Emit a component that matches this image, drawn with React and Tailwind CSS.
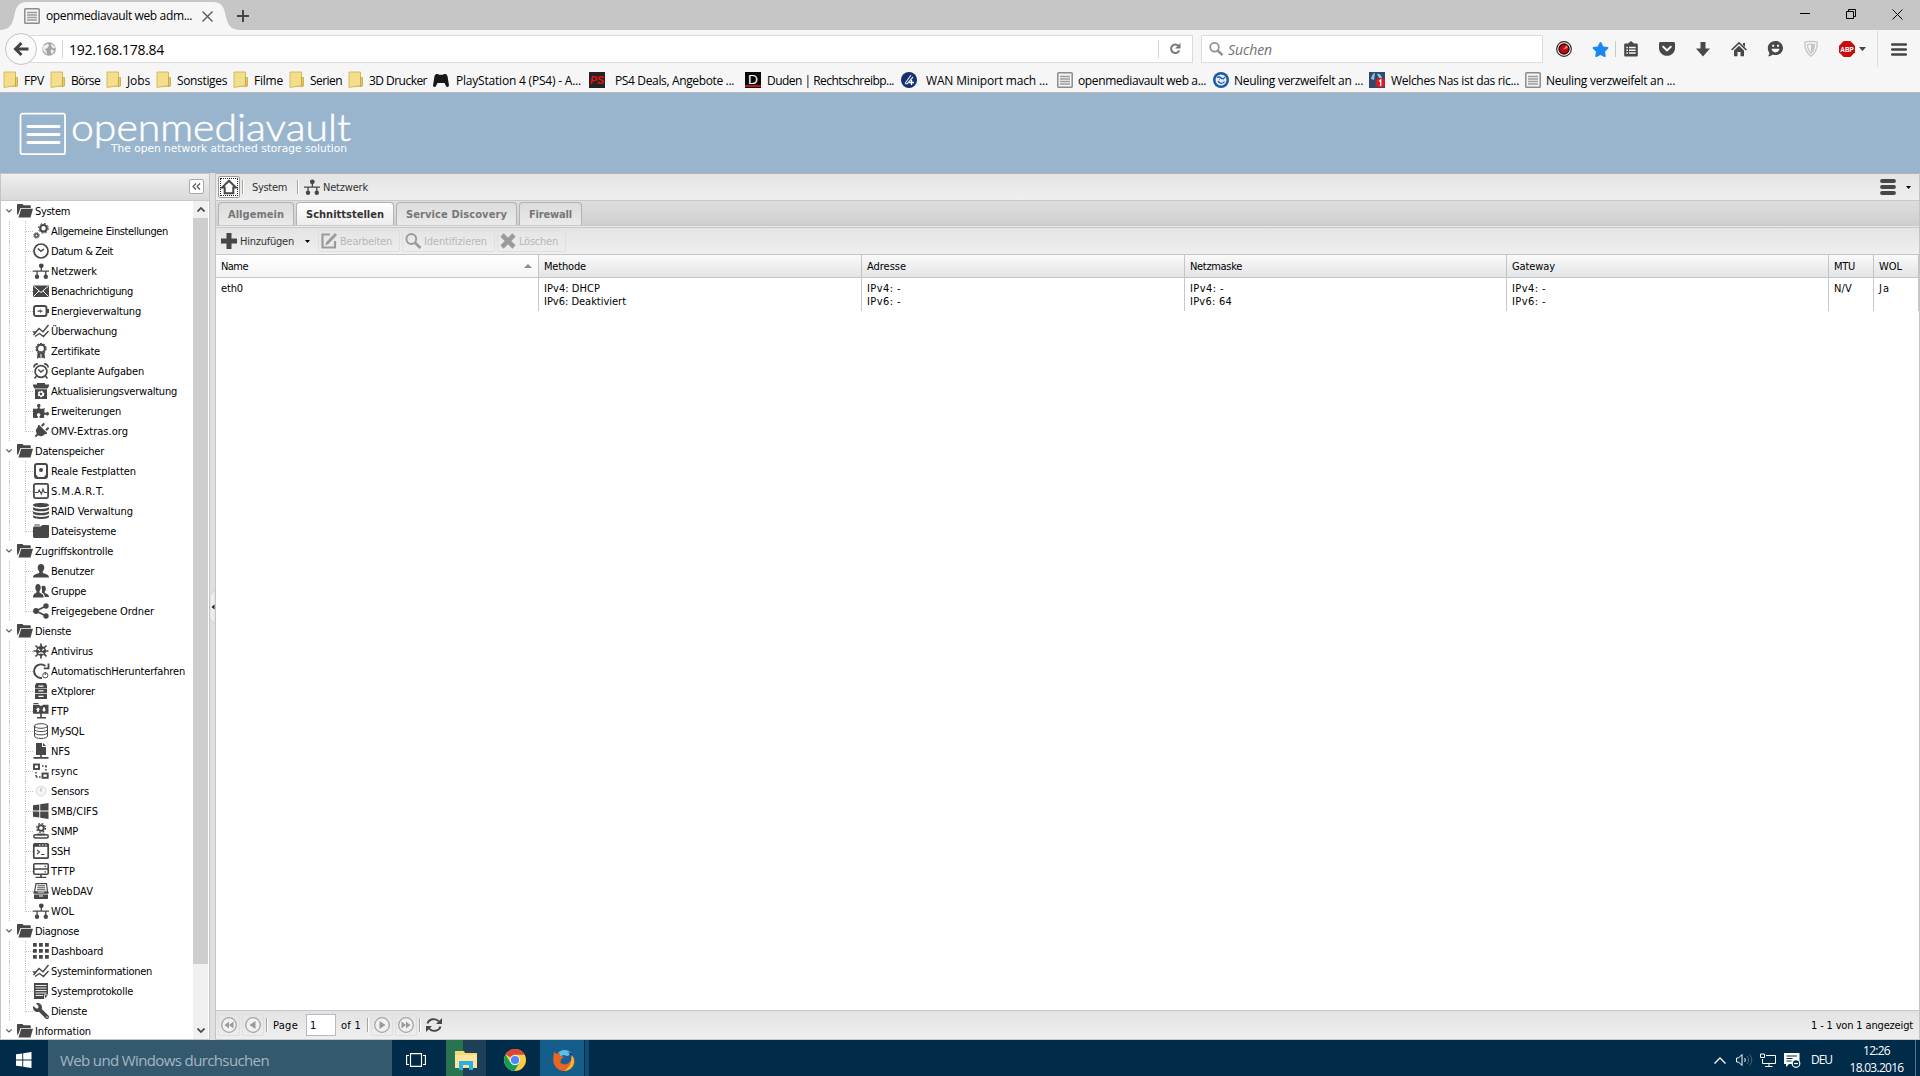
import { useLayoutEffect, useRef } from 'react';
import { FaPuzzlePiece, FaWrench, FaPlug, FaStar } from 'react-icons/fa';

const TREE = [
  {
    label: 'System',
    width: 35,
    items: [
      ['gears', 'Allgemeine Einstellungen', 117],
      ['clock', 'Datum & Zeit', 62],
      ['network', 'Netzwerk', 46],
      ['mail', 'Benachrichtigung', 82],
      ['power', 'Energieverwaltung', 90],
      ['chart', 'Überwachung', 66],
      ['award', 'Zertifikate', 49],
      ['alarm', 'Geplante Aufgaben', 93],
      ['update', 'Aktualisierungsverwaltung', 126],
      ['puzzle', 'Erweiterungen', 70],
      ['plug', 'OMV-Extras.org', 77],
    ],
  },
  {
    label: 'Datenspeicher',
    width: 69,
    items: [
      ['disk', 'Reale Festplatten', 85],
      ['smart', 'S.M.A.R.T.', 54],
      ['raid', 'RAID Verwaltung', 82],
      ['folderClosed', 'Dateisysteme', 65],
    ],
  },
  {
    label: 'Zugriffskontrolle',
    width: 78,
    items: [
      ['user', 'Benutzer', 43],
      ['group', 'Gruppe', 35],
      ['share', 'Freigegebene Ordner', 103],
    ],
  },
  {
    label: 'Dienste',
    width: 36,
    items: [
      ['virus', 'Antivirus', 42],
      ['autoshut', 'AutomatischHerunterfahren', 134],
      ['drawers', 'eXtplorer', 44],
      ['ftp', 'FTP', 18],
      ['database', 'MySQL', 33],
      ['nfs', 'NFS', 19],
      ['rsync', 'rsync', 27],
      ['gauge', 'Sensors', 38],
      ['windows', 'SMB/CIFS', 47],
      ['snmp', 'SNMP', 27],
      ['terminal', 'SSH', 19],
      ['tftp', 'TFTP', 24],
      ['webdav', 'WebDAV', 42],
      ['network', 'WOL', 23],
    ],
  },
  {
    label: 'Diagnose',
    width: 44,
    items: [
      ['grid', 'Dashboard', 52],
      ['chart', 'Systeminformationen', 101],
      ['log', 'Systemprotokolle', 82],
      ['wrench', 'Dienste', 36],
    ],
  },
  { label: 'Information', width: 56, items: [] },
];

const BOOKMARKS = [
  { icon: 'bmFolder', label: 'FPV', width: 20, box: 'w-[47px]', gap: 'w-5' },
  { icon: 'bmFolder', label: 'Börse', width: 29, box: 'w-14', gap: 'w-5' },
  { icon: 'bmFolder', label: 'Jobs', width: 23, box: 'w-[50px]', gap: 'w-5' },
  { icon: 'bmFolder', label: 'Sonstiges', width: 50, box: 'w-[77px]', gap: 'w-5' },
  { icon: 'bmFolder', label: 'Filme', width: 29, box: 'w-14', gap: 'w-5' },
  { icon: 'bmFolder', label: 'Serien', width: 32, box: 'w-[59px]', gap: 'w-5' },
  { icon: 'bmFolder', label: '3D Drucker', width: 58, box: 'w-[84px]', gap: 'w-5' },
  { icon: 'gamepad', label: 'PlayStation 4 (PS4) - A...', width: 125, box: 'w-[156px]', gap: 'w-[23px]' },
  { icon: 'ps', label: 'PS4 Deals, Angebote ...', width: 119, box: 'w-[156px]', gap: 'w-[26px]' },
  { icon: 'duden', label: 'Duden | Rechtschreibp...', width: 127, box: 'w-[156px]', gap: 'w-[22px]' },
  { icon: 'wan', label: 'WAN Miniport mach ...', width: 122, box: 'w-[156px]', gap: 'w-[25px]' },
  { icon: 'omv', label: 'openmediavault web a...', width: 128, box: 'w-[156px]', gap: 'w-[21px]' },
  { icon: 'face', label: 'Neuling verzweifelt an ...', width: 129, box: 'w-[156px]', gap: 'w-[21px]' },
  { icon: 'nas', label: 'Welches Nas ist das ric...', width: 128, box: 'w-[156px]', gap: 'w-[22px]' },
  { icon: 'omv', label: 'Neuling verzweifelt an ...', width: 129, box: 'w-[156px]', gap: 'w-[21px]' },
];

const COLUMNS = [
  { title: 'Name', tw: 27, lines: [['eth0', 22]], box: 'w-[323px]', sorted: true },
  { title: 'Methode', tw: 42, lines: [['IPv4: DHCP', 56], ['IPv6: Deaktiviert', 82]], box: 'w-[323px]' },
  { title: 'Adresse', tw: 39, lines: [['IPv4: -', 34], ['IPv6: -', 34]], box: 'w-[323px]' },
  { title: 'Netzmaske', tw: 52, lines: [['IPv4: -', 34], ['IPv6: 64', 42]], box: 'w-[322px]' },
  { title: 'Gateway', tw: 43, lines: [['IPv4: -', 34], ['IPv6: -', 34]], box: 'w-[322px]' },
  { title: 'MTU', tw: 21, lines: [['N/V', 18]], box: 'w-[45px]' },
  { title: 'WOL', tw: 23, lines: [['Ja', 11]], box: 'w-[45px]' },
];

const ICONS = {
  gears: (
    <>
      <circle cx="10.5" cy="5.3" r="3.3" fill="none" stroke="currentColor" strokeWidth="2.2" />
      <circle cx="10.500" cy="5.300" r="4.900" fill="none" stroke="currentColor" strokeWidth="1" strokeDasharray="1.920 1.920" />
      <circle cx="3.500" cy="12.400" r="1.700" fill="none" stroke="currentColor" strokeWidth="1.500" />
      <circle cx="3.500" cy="12.400" r="2.800" fill="none" stroke="currentColor" strokeWidth="1" strokeDasharray="1.100 1.100" />
    </>
  ),
  clock: (
    <g fill="none" stroke="currentColor">
      <circle cx="8" cy="8" r="7" strokeWidth="1.700" />
      <path d="M4.800 5.500 8 8.300l3-2.300" strokeWidth="1.500" />
    </g>
  ),
  network: (
    <>
      <circle cx="8.300" cy="2.800" r="2.400" />
      <circle cx="4" cy="13.800" r="2.200" />
      <circle cx="12.800" cy="13.800" r="2.200" />
      <path d="M7.700 3h1.300v4.500h7v1.200h-2.600V13h-1.300V8.700H4.700V13H3.400V8.700H0V7.500h7.700z" />
    </>
  ),
  mail: (
    <>
      <path d="M0 2.500h16v11.500H0z" />
      <path d="m.5 3 7.500 6.500L15.500 3M.5 13.500l5.500-5.500m9.500 5.500L10 8" fill="none" stroke="#fff" strokeWidth="1" />
    </>
  ),
  power: (
    <>
      <rect x="1" y="3" width="12.500" height="10" rx="2" fill="none" stroke="currentColor" strokeWidth="1.900" />
      <path d="M14 6h2v4h-2zM4.500 7.500h2l1-2v2h2v1.200h-1.500l-1 2v-2h-2.500z" />
    </>
  ),
  chart: (
    <path d="M.5 12 6 5.500l4 3.300L15.500 2M0 9h2.500M2 13.500l4.500-3 4 3 5-5.500" fill="none" stroke="currentColor" strokeWidth="1.400" />
  ),
  award: (
    <>
      <circle cx="8" cy="5.500" r="3.800" fill="none" stroke="currentColor" strokeWidth="1.900" />
      <circle cx="8" cy="5.500" r="5" fill="none" stroke="currentColor" strokeWidth="1.200" strokeDasharray="2 1.140" />
      <path d="M4.500 9.500 7.500 10v5.500L6 14.500l-2 1.500zM11.500 9.500 8.500 10v5.500l1.500-1L12 16z" />
    </>
  ),
  alarm: (
    <g fill="none" stroke="currentColor">
      <circle cx="8" cy="8.500" r="5.900" strokeWidth="1.700" />
      <path d="M5.300 6.500 8 9l2.800-2.300" strokeWidth="1.400" />
      <path d="M.8 4.500C1 2.500 2.500 1 4.800.9M15.200 4.500C15 2.500 13.500 1 11.200.9M3.500 13l-2 2.500M12.500 13l2 2.500" strokeWidth="1.600" />
    </g>
  ),
  update: (
    <>
      <path d="M4 0h8v1.500h4V3l-1.500 2.500h-13L0 3V1.500h4zM2 6.200h12V16H2z" />
      <circle cx="8" cy="11" r="2.300" fill="none" stroke="#fff" strokeWidth="2" strokeDasharray="1.500 .9" />
      <circle cx="8" cy="11" r="2" fill="none" stroke="#fff" strokeWidth="1.200" />
    </>
  ),
  puzzle: <FaPuzzlePiece size={16} />,
  plug: <g transform="rotate(45 8 8)"><FaPlug size={16} /></g>,
  wrench: <g transform="matrix(-1 0 0 1 16 0)"><FaWrench size={16} /></g>,
  disk: (
    <>
      <rect x="2" y="1" width="12" height="14" rx="2" fill="none" stroke="currentColor" strokeWidth="2" />
      <circle cx="8" cy="7" r="2" />
      <path d="M3 11.500 5 14H3zM13 11.500 11 14h2z" />
    </>
  ),
  smart: (
    <g fill="none" stroke="currentColor">
      <rect x=".9" y=".9" width="14.200" height="14.200" rx="1.500" strokeWidth="1.800" />
      <path d="M2 9.500h3L6.200 7l2.200 4 1.600-5 1.300 3.500h2.700" strokeWidth="1.100" />
    </g>
  ),
  raid: (
    <path d="M0 2c0-1.300 3.500-2 8-2s8 .7 8 2-3.500 2.300-8 2.300S0 3.300 0 2zm0 2.300C1.500 5.500 4.500 6 8 6s6.500-.5 8-1.700v2C15.500 7.700 12 8.300 8 8.300S.5 7.700 0 6.300zm0 4C1.500 9.500 4.500 10 8 10s6.500-.5 8-1.700v2c-.5 1.400-4 2-8 2s-7.500-.6-8-2zm0 4C1.500 13.500 4.500 14 8 14s6.500-.5 8-1.700V14c-.5 1.300-4 2-8 2s-7.500-.7-8-2z" />
  ),
  folderClosed: <path d="M1.500 1.500h5l1 1H1.200zM0 5c0-.8.5-1.500 1.500-1.500h6L9.500 2H15c.6 0 1 .4 1 1v10.500c0 .8-.7 1.500-1.500 1.500h-13C.7 15 0 14.300 0 13.500z" />,
  folderOpen: <path d="M.5 1h5l1 1.300h6.500c.5 0 .8.400.8.900V5H3.500L.8 12.500 0 10V1.500zM4.200 5.800H16L13.500 14.500H1.500z" />,
  user: <path d="M8 1c2 0 3.300 1.400 3.300 3.500 0 1.700-.6 3-1.500 3.700-.3 1.500.1 2 1.400 2.400C13.500 11.300 16 12 16 14.500H0c0-2.500 2.500-3.200 4.800-3.900 1.300-.4 1.700-.9 1.400-2.400-.9-.7-1.500-2-1.500-3.700C4.700 2.400 6 1 8 1z" />,
  group: (
    <>
      <path d="M5 1c1.600 0 2.700 1.300 2.700 3.300 0 1.600-.5 3-1.200 3.600-.2 1.400.1 1.900 1.200 2.400 1.600.8 3 1.500 3 4.200H0c0-2.700 1-3.400 2.400-4.200 1-.5 1.300-1 1.100-2.400-.7-.6-1.200-2-1.200-3.600C2.300 2.300 3.400 1 5 1z" />
      <path d="M8.500 3.800C9 3 9.700 2.700 10.500 2.700c1.500 0 2.300 1.100 2.300 2.700 0 1.300-.4 2.400-1 3-.2 1.100.1 1.500 1.100 2 1.700.8 3.100 1.300 3.100 3.600h-4.200c-.2-2.500-1.600-3.600-3-4.400C9.200 8 9 6.500 8.500 3.800z" />
    </>
  ),
  share: (
    <>
      <circle cx="3" cy="8" r="2.900" />
      <circle cx="13" cy="3" r="2.700" />
      <circle cx="13" cy="13" r="2.700" />
      <path d="M13 3 3 8l10 5" fill="none" stroke="currentColor" strokeWidth="1.700" />
    </>
  ),
  virus: (
    <>
      <circle cx="8" cy="8" r="5" />
      <path d="M8 .5v15M.5 8h15M2.500 2.500l11 11M13.500 2.500l-11 11" stroke="currentColor" strokeWidth="1.700" />
      <path d="m4.800 6 2.200 1.500M11.200 6 9 7.500M5.500 10.700c1.500-1 3.500-1 5 0" stroke="#fff" strokeWidth="1.100" fill="none" />
    </>
  ),
  autoshut: (
    <g fill="none" stroke="currentColor">
      <path d="M12.500 3.200A6.800 6.800 0 1 0 9 14.900" strokeWidth="1.800" />
      <path d="M15.500.5v4.800h-4.800" strokeWidth="1.800" />
      <circle cx="12.300" cy="12.300" r="2.600" strokeWidth="1" />
      <path d="M12.300 9v3" strokeWidth="1" />
    </g>
  ),
  drawers: (
    <>
      <path d="M3.500 0h9L14 2v3H2V2zM2 5.600h12v4.600H2zM2 10.900h12V16H2z" />
      <path d="M5.500 2.500h5v1.300h-5zM5.500 7.300h5v1.300h-5zM5.500 12.700h5V14h-5z" fill="#fff" />
    </>
  ),
  ftp: (
    <>
      <path d="M.5 0h5v1h-5zM0 1.800h6l1 1h2l1-1h5.500v9H0zM7.200 10.500h1.600V14H13v1.500H4V14h3.200z" />
      <path d="m5 4.300 2.200 2.500H6v2H4v-2H2.800zM11 9 8.800 6.500H10v-2h2v2h1.200z" fill="#fff" />
    </>
  ),
  database: (
    <g fill="none" stroke="currentColor" strokeWidth="1">
      <ellipse cx="8" cy="3" rx="6.500" ry="2.300" />
      <path d="M1.500 3v10c0 3.300 13 3.300 13 0V3M1.500 6.300c0 3 13 3 13 0M1.500 9.600c0 3 13 3 13 0" />
    </g>
  ),
  nfs: <path d="M3 0h6v4h4v8H3zM10 0l3 3h-3zM7.200 12h1.600v2H15.500v1.800H.5V14h6.700z" />,
  rsync: (
    <g fill="none" stroke="currentColor">
      <rect x="1" y="1.500" width="5" height="4.500" strokeWidth="1.900" />
      <rect x="9.500" y="10.500" width="5.200" height="4.300" strokeWidth="1.900" />
      <path d="M9 3h5M13 3v6M3 9v5.500M3 14h5" strokeWidth="1.600" strokeDasharray="1.600 1.400" />
    </g>
  ),
  gauge: (
    <g stroke="#ddd">
      <circle cx="8" cy="8" r="5" fill="#f4f4f4" />
      <path d="M8 5v3.500" stroke="#aaa" />
    </g>
  ),
  windows: <path d="M0 2.300 6.300 1.400v6.100H0zM7.200 1.200 15.500 0v7.500H7.200zM0 8.400h6.300v6.100L0 13.700zM7.200 8.400h8.300V16l-8.300-1.300z" />,
  snmp: (
    <g fill="none" stroke="currentColor">
      <circle cx="8" cy="5" r="2.800" strokeWidth="1.900" />
      <circle cx="8" cy="5" r="4.400" strokeWidth="1.300" strokeDasharray="1.730 1.730" />
      <rect x=".8" y="11.800" width="14.400" height="3.200" rx="1.500" strokeWidth="1.500" />
      <path d="M4 11.500h8" strokeWidth="1.800" />
    </g>
  ),
  terminal: (
    <>
      <rect x=".8" y=".8" width="14.400" height="14.400" rx="1" fill="none" stroke="currentColor" strokeWidth="1.700" />
      <path d="M1 1h14v2.800H1z" />
      <path d="M6 1.500h1.500v1H6zM9 1.500h1.500v1H9zM12 1.500h1.500v1H12z" fill="#fff" />
      <path d="m4 7 2.500 2L4 11M8 11.500h3.500" fill="none" stroke="currentColor" strokeWidth="1.200" />
    </>
  ),
  tftp: (
    <>
      <rect x=".8" y=".8" width="14.400" height="10.400" rx="1" fill="none" stroke="currentColor" strokeWidth="1.600" />
      <path d="M1 5.300h14v1.500H1zM11.500 2.700H13V4h-1.500zM11.500 8.300H13v1.300h-1.500zM7.200 11h1.600v2.700h4.500V15H2.700v-1.300h4.500z" />
    </>
  ),
  webdav: (
    <>
      <path d="M3 .7h10.500L14.500 9h-13z" fill="none" stroke="currentColor" strokeWidth="1.200" />
      <path d="M4.500 2.800h7.500M4.200 4.800h8M4 6.800h8.500" stroke="currentColor" />
      <path d="M.5 8.500h3.800l1 1.500h5.400l1-1.500h3.800v2.200H.5zM1 11.400h14V15c0 .6-.3 1-1 1H2c-.7 0-1-.4-1-1z" />
      <path d="M6 12.500h4v1H6z" fill="#fff" />
    </>
  ),
  grid: (
    <path d="M0 0h3.800v3.800H0zM6 0h3.800v3.800H6zM12 0h3.800v3.800H12zM0 6h3.800v3.800H0zM6 6h3.800v3.800H6zM12 6h3.800v3.800H12zM0 12h3.800v3.800H0zM6 12h3.800v3.800H6zM12 12h3.800v3.800H12z" />
  ),
  log: (
    <>
      <path d="M1 0h14v11.500h-4V16H1z" />
      <path d="m11.800 12.300h3L11.800 15.500z" />
      <path d="M2.500 2.500h11M2.500 5h11M2.500 7.500h11M2.500 10h11M2.500 12.500H10" stroke="#fff" strokeWidth=".9" />
    </>
  ),
  home: <path d="M8 1.700 1.200 8.400h2.500v5.900h8.600V8.400h2.500z" fill="none" stroke="currentColor" strokeWidth="2" />,
  plus: <path d="M5.500 0h5v5.500H16v5h-5.500V16h-5v-5.500H0v-5h5.500z" />,
  edit: (
    <>
      <path d="M14 8v6.500H1.500v-13H9" fill="none" stroke="currentColor" strokeWidth="2.200" />
      <path d="M14 0l2 2-8.500 9-3.500 1.500L5.300 9z" />
    </>
  ),
  search: (
    <g fill="none" stroke="currentColor">
      <circle cx="6.300" cy="6" r="4.900" strokeWidth="2" />
      <path d="m10 9.800 5.500 5.200" strokeWidth="2.800" />
    </g>
  ),
  cross: <path d="m2 2 12 12M14 2 2 14" stroke="currentColor" strokeWidth="4.600" />,
  refresh: (
    <>
      <path d="M1.500 6.500C3 1.500 9.500.8 12.800 4.300M14.500 9.500C13 14.500 6.500 15.200 3.200 11.700" fill="none" stroke="currentColor" strokeWidth="1.900" />
      <path d="M16 1v6h-6zM0 15V9h6z" />
    </>
  ),
  bmFolder: (
    <>
      <path d="M1.500 0h10v15h-10z" fill="#e9cf6b" />
      <path d="M0 0h11.500v13.500L0 15.500z" fill="#f3df8b" stroke="#cfae4b" strokeWidth=".8" />
      <path d="M11.500 5.500h2v8.500l-2 .8z" fill="#e9cb62" stroke="#c29c38" strokeWidth=".7" />
    </>
  ),
  omv: (
    <>
      <rect x=".8" y=".8" width="14.400" height="14.400" rx=".8" fill="#f4f4f4" stroke="#8c8c8c" strokeWidth="1.500" />
      <path d="M3 4.500h10M3 7h10M3 9.500h10M3 12h10" stroke="#9b9b9b" strokeWidth="1.300" />
    </>
  ),
  gamepad: <path d="M3 2h2.500v.8h5V2H13l1.500 2L16 13.500c-.5 2-2.500 1.700-3 .5l-1.500-3h-7L3 14c-.5 1.200-2.500 1.500-3-.5L1.500 4z" fill="#181818" />,
  ps: (
    <>
      <path d="M0 0h16v16H0z" fill="#232323" />
      <text x="1" y="12.200" fontSize="10.500" fontWeight="900" fontStyle="italic" textLength="14" fill="#f00d0d" fontFamily="Liberation Sans">PS</text>
    </>
  ),
  duden: (
    <>
      <path d="M0 0h16v16H0z" fill="#080808" />
      <path d="M0 13h16v2H0z" fill="#c1121f" />
      <text x="3" y="11.500" fontSize="12" textLength="10" lengthAdjust="spacingAndGlyphs" fill="#fff" fontFamily="Liberation Sans">D</text>
    </>
  ),
  wan: (
    <>
      <circle cx="8" cy="8" r="8" fill="#172f6b" />
      <path d="M4 11.500 10 3M6 12 12 5M4 11.500l2 .5" stroke="#d7e2f5" strokeWidth="1.200" fill="none" />
      <path d="M10.500 8v5M8 10.500h5" stroke="#fff" strokeWidth="1.400" />
    </>
  ),
  face: (
    <>
      <circle cx="8" cy="8" r="8" fill="#1b58a4" />
      <circle cx="8" cy="8" r="5.500" fill="#e4eefa" />
      <path d="M4 5.500c2-1 3-.5 4 .5s3 1 4-1M5 9c1 3 5 3 6.500.5M6 7.500h.5M10 7.500h.5" stroke="#1b58a4" strokeWidth="1.300" fill="none" />
    </>
  ),
  nas: (
    <>
      <path d="M0 0h16v16H0z" fill="#2d4b6d" />
      <path d="M2 7c1-5 3-6 4-6l-1 7zM8 2c3-1 5 2 5 5l-3-1z" fill="#8fc1e3" />
      <circle cx="11.300" cy="10.800" r="4.900" fill="#dd1c22" />
      <path d="m10 9.200 1.700-1.200v6" stroke="#fff" strokeWidth="1.300" fill="none" />
    </>
  ),
  record: (
    <>
      <circle cx="8" cy="8" r="7.300" fill="#fff" stroke="#2b2b2b" strokeWidth="1.200" />
      <circle cx="8" cy="8" r="5" fill="#c20b0e" stroke="#3a0606" strokeWidth="1.400" />
      <path d="M7 8.500 11 4l.8 3z" fill="#f28a85" />
    </>
  ),
  star: <FaStar size={17} color="#1b87f3" />,
  clipboard: (
    <>
      <path d="M5 2.500 8 0l3 2.500h2.500c.8 0 1.300.5 1.300 1.300v10.400c0 .8-.5 1.300-1.300 1.300h-11c-.8 0-1.300-.5-1.300-1.300V3.800c0-.8.5-1.300 1.300-1.300z" />
      <path d="M3.300 5.700h1.600v1.500H3.300zM6 5.700h6.700v1.500H6zM3.300 8.500h1.600V10H3.300zM6 8.500h6.700V10H6zM3.300 11.300h1.600v1.500H3.300zM6 11.300h6.700v1.500H6z" fill="#f6f6f6" />
    </>
  ),
  pocket: (
    <>
      <path d="M1.500 1h13c.8 0 1.500.6 1.500 1.500V7c0 4.500-3.600 7.800-8 7.800S0 11.500 0 7V2.500C0 1.600.7 1 1.500 1z" />
      <path d="m4.200 5.700 3.800 3.700 3.800-3.700" fill="none" stroke="#f6f6f6" strokeWidth="2" strokeLinecap="round" />
    </>
  ),
  download: <path d="M5.500 1h5v6.500H15L8 15.500 1 7.500h4.500z" />,
  houseFilled: <path d="M8 .7 16 8.400l-1.200 1.200L8 3 1.200 9.600 0 8.400zM12 2h2v4l-2-2zM8 4.800l5 4.800v5.700H9.500V11h-3v4.300H3V9.600z" />,
  chat: (
    <>
      <path d="M8.500 0C12.700 0 16 3 16 7s-3.300 7-7.500 7c-1 0-2-.1-2.800-.5C4.500 14.700 3 15.300 1 15.300c1-1 1.500-2.300 1.300-3.600C1.300 10.500.8 8.800.8 7 .8 3 4.300 0 8.500 0z" />
      <path d="M4.500 7.800h8c-.2 2-1.900 3.600-4 3.600s-3.800-1.600-4-3.600zM5.200 3.800h2v2h-2zM10 3.800h2v2h-2z" fill="#f6f6f6" />
    </>
  ),
  shield: (
    <g fill="none" stroke="#c4c4c4">
      <path d="M1.700 1.200C6 .2 10 .2 14.300 1.200 14.300 8 12 12.500 8 15.200 4 12.500 1.700 8 1.700 1.200z" strokeWidth="1.300" />
      <path d="M4.500 3.500c2.500-.6 4.500-.6 7 0-.1 4-1.300 6.800-3.500 8.700-2.200-1.900-3.400-4.700-3.500-8.700z" strokeWidth="1.200" />
      <path d="M8 3v9c2-2 3.200-4.500 3.500-8.500z" fill="#c4c4c4" strokeWidth="0" />
    </g>
  ),
  abp: (
    <>
      <path d="M4.700 0h6.600L16 4.700v6.600L11.300 16H4.700L0 11.300V4.700z" fill="#c70d0d" />
      <text x="1.300" y="10.800" fontSize="7.500" fontWeight="700" textLength="13.400" lengthAdjust="spacingAndGlyphs" fill="#fff" fontFamily="Liberation Sans">ABP</text>
    </>
  ),
  globe: (
    <>
      <circle cx="8" cy="8" r="7.800" fill="#a3a3a3" />
      <path d="M2 4c2-.5 4-2 5-2l1 2-2 3-3 1 2 2 1 4-3-2-2.500-4zM10 2l3 1.500 2 3-2 1-2-2zM10 8.500l3 .5.500 2L11 14l-1-3z" fill="#f0f0f0" />
    </>
  ),
};

const SANS = "font-['DejaVu_Sans_Condensed','DejaVu_Sans',sans-serif]";
const SEGOE = "font-['Open_Sans','Noto_Sans',sans-serif]";

/** Sixteen unit icon, drawn in the current text colour. */
function Icon({ name, className = 'size-4' }) {
  return (
    <svg viewBox="0 0 16 16" fill="currentColor" className={`shrink-0 overflow-visible ${className}`}>
      {ICONS[name]}
    </svg>
  );
}

/** Single line of text, tracked so that it fills the given width. */
function Label({ children, width, className = '' }) {
  const ref = useRef(null);

  useLayoutEffect(() => {
    const el = ref.current;
    el.style.letterSpacing = '0px';
    const natural = el.getBoundingClientRect().width;
    el.style.letterSpacing = `${(width - natural) / el.textContent.length}px`;
  }, [width, children]);

  return (
    <span ref={ref} className={`inline-block shrink-0 whitespace-pre ${className}`}>
      {children}
    </span>
  );
}

function TitleBar() {
  return (
    <div className="flex h-[30px] bg-[#c6c6c6]">
      <div className="relative h-full w-60">
        <svg viewBox="0 0 240 30" className="absolute inset-0 h-[30px] w-60">
          <path d="M0 30C9 30 12 25 14 17 16 8 17 2 28 2h184c11 0 12 6 14 15 2 8 5 13 14 13z" fill="#f6f6f6" />
        </svg>
        <div className="relative flex h-full items-center pt-0.5 pl-6">
          <Icon name="omv" />
          <Label width={146} className="ml-1.5 text-xs text-black">
            openmediavault web adm...
          </Label>
          <svg viewBox="0 0 11 11" className="ml-2.5 size-[11px]">
            <path d="m.5.5 10 10m0-10-10 10" stroke="#555" strokeWidth="1.300" />
          </svg>
        </div>
      </div>
      <svg viewBox="0 0 12 12" className="mt-2.5 -ml-[3px] size-3">
        <path d="M6 0v12M0 6h12" stroke="#444" strokeWidth="2" />
      </svg>
      <div className="ml-auto flex items-center pr-[17px] pb-0.5">
        <svg viewBox="0 0 10 10" className="mr-9 size-2.5">
          <path d="M0 4.500h10" stroke="#000" />
        </svg>
        <svg viewBox="0 0 10 10" className="mr-[36px] size-2.5" fill="none" stroke="#000">
          <path d="M.5 2.500h7v7h-7zM2.500 2V.5h7v7H8" />
        </svg>
        <svg viewBox="0 0 11 11" className="size-[11px]">
          <path d="m.5.5 10 10m0-10-10 10" stroke="#000" />
        </svg>
      </div>
    </div>
  );
}

function NavBar() {
  return (
    <div className="flex h-[38px] items-center bg-[#f6f6f6] text-[#484848]">
      <div className="relative flex h-7 w-[1195px] items-center pl-8">
        <div className="ml-[-2px] flex h-7 w-full items-center border border-[#dcdcdc] bg-white">
          <Icon name="globe" className="ml-[11px] size-3.5" />
          <div className="ml-1.5 h-[18px] w-px bg-[#d5d5d5]" />
          <Label width={95} className="ml-1.5 pt-0.5 text-sm text-black">
            192.168.178.84
          </Label>
          <div className="ml-auto h-[18px] w-px bg-[#d5d5d5]" />
          <svg viewBox="0 0 12 12" className="mr-[11px] ml-2.5 size-3">
            <path d="M9.500 2.800A4.300 4.300 0 1 0 10.300 7.500" fill="none" stroke="#777" strokeWidth="1.900" />
            <path d="M11.500 0v5.500H6z" fill="#777" />
          </svg>
        </div>
        <div className="absolute top-[-2px] left-[5px] flex size-8 items-center justify-center rounded-full border border-[#c4c4c4] bg-[#fafafa]">
          <svg viewBox="0 0 16 16" className="size-4">
            <path d="M15.500 8H3M8.500 2 2.500 8l6 6" fill="none" stroke="#444" strokeWidth="3" />
          </svg>
        </div>
      </div>
      <div className="ml-1.5 flex h-7 w-[342px] items-center border border-[#dcdcdc] bg-white pl-[7px]">
        <Icon name="search" className="size-3.5 text-[#8f8f8f]" />
        <Label width={44} className="ml-[5px] pt-0.5 text-sm text-[#6f6f6f] italic">
          Suchen
        </Label>
      </div>
      <Icon name="record" className="ml-[13px] size-4" />
      <Icon name="star" className="ml-5 size-4" />
      <div className="ml-[7px] h-4 w-px bg-[#c8c8c8]" />
      <Icon name="clipboard" className="ml-[7px] size-4" />
      <Icon name="pocket" className="ml-5 size-4" />
      <Icon name="download" className="ml-5 size-4" />
      <Icon name="houseFilled" className="ml-5 size-4" />
      <Icon name="chat" className="ml-5 size-4" />
      <Icon name="shield" className="ml-5 size-4" />
      <Icon name="abp" className="ml-5 size-4" />
      <svg viewBox="0 0 7 4" className="ml-1 h-1 w-[7px]">
        <path d="M0 0h7L3.500 4z" fill="#444" />
      </svg>
      <div className="ml-[11px] h-9 w-px bg-[#dcdcdc]" />
      <svg viewBox="0 0 16 13" className="ml-[13px] h-[13px] w-4">
        <path d="M1.200 1.500h13.600M1.200 6.500h13.600M1.200 11.500h13.600" stroke="#444" strokeWidth="2.600" strokeLinecap="round" />
      </svg>
    </div>
  );
}

function BookmarkBar() {
  return (
    <div className="flex h-[25px] items-center border-b border-[#b9b9b9] bg-[#f6f6f6] pl-1">
      {BOOKMARKS.map((b, i) => (
        <div key={i} className={`flex shrink-0 items-center ${b.box}`}>
          <div className={`flex shrink-0 ${b.gap}`}>
            <Icon name={b.icon} />
          </div>
          <Label width={b.width} className="pt-0.5 text-xs text-black">
            {b.label}
          </Label>
        </div>
      ))}
    </div>
  );
}

function Banner() {
  return (
    <div className="h-20 bg-[#99b5ce] pt-[18px] pl-[18px]">
      <svg viewBox="0 0 340 46" className="h-[46px] w-[340px] overflow-visible">
        <rect x="2.500" y="2.700" width="44.500" height="40.500" rx="2" fill="none" stroke="#fff" strokeWidth="1.800" />
        <path d="M10 15.500h31M10 23.500h31M10 31.500h31" stroke="#fff" strokeWidth="3" strokeLinecap="round" />
        <text x="53" y="29.500" fontSize="38" fontWeight="300" textLength="280" lengthAdjust="spacingAndGlyphs" fill="#fff" stroke="#fff" strokeWidth=".5" fontFamily="Lato">
          openmediavault
        </text>
        <text x="93" y="41" fontSize="10.500" textLength="236" lengthAdjust="spacingAndGlyphs" fill="#fff" fontFamily="DejaVu Sans">
          The open network attached storage solution
        </text>
      </svg>
    </div>
  );
}

function TreeItem({ icon, label, width, last }) {
  return (
    <div className="flex h-5 items-center text-[#474747]">
      <div className="ml-2 h-full w-4 shrink-0 border-l border-dotted border-[#c4c4c4]" />
      <div className="flex h-full w-2 shrink-0 flex-col">
        <div className="h-[11px] border-b border-l border-dotted border-[#c4c4c4]" />
        {!last && <div className="flex-1 border-l border-dotted border-[#c4c4c4]" />}
      </div>
      <Icon name={icon} />
      <Label width={width} className="ml-0.5 pt-0.5 text-black">
        {label}
      </Label>
    </div>
  );
}

function Sidebar() {
  return (
    <div className="flex w-[210px] shrink-0 flex-col border border-[#c5c5c5] bg-white">
      <div className="flex h-[27px] shrink-0 items-center justify-end border-b border-[#c8c8c8] bg-linear-to-b from-[#efefef] to-[#d9d9d9] pr-[5px] pb-px">
        <div className="flex size-[15px] items-center justify-center rounded-xs border border-[#aaa] bg-white">
          <svg viewBox="0 0 9 7" className="h-[7px] w-[9px]">
            <path d="M4 .5 1 3.500l3 3M8 .5 5 3.500l3 3" fill="none" stroke="#555" strokeWidth="1.200" />
          </svg>
        </div>
      </div>
      <div className="flex min-h-0 flex-1 pr-px">
        <div className="min-w-0 flex-1 overflow-hidden">
          {TREE.map((group) => (
            <div key={group.label}>
              <div className="flex h-5 items-center pl-[5px] text-[#474747]">
                <svg viewBox="0 0 6 4" className="mr-[5px] h-1 w-1.5 overflow-visible">
                  <path d="M.3.3 3 3 5.700.3" fill="none" stroke="#555" strokeWidth="1.100" />
                </svg>
                <Icon name="folderOpen" />
                <Label width={group.width} className="ml-0.5 pt-0.5 text-black">
                  {group.label}
                </Label>
              </div>
              {group.items.map(([icon, label, width], i) => (
                <TreeItem key={label} icon={icon} label={label} width={width} last={i === group.items.length - 1} />
              ))}
            </div>
          ))}
        </div>
        <div className="flex w-[15px] shrink-0 flex-col bg-[#f0f0f0]">
          <div className="flex h-[17px] items-center justify-center">
            <svg viewBox="0 0 8 5" className="h-[5px] w-2">
              <path d="m.5 4.500 3.500-3.500 3.500 3.500" fill="none" stroke="#444" strokeWidth="1.700" />
            </svg>
          </div>
          <div className="h-[746px] bg-[#cdcdcd]" />
          <div className="mt-auto flex h-[17px] items-center justify-center">
            <svg viewBox="0 0 8 5" className="h-[5px] w-2">
              <path d="m.5.5 3.500 3.500L7.500.5" fill="none" stroke="#444" strokeWidth="1.700" />
            </svg>
          </div>
        </div>
      </div>
    </div>
  );
}

function Separator({ className }) {
  return <div className={`h-3.5 w-0.5 border-l border-[#a9a595] bg-white ${className}`} />;
}

const TABS = [
  { label: 'Allgemein', width: 56, box: 'w-[76px]' },
  { label: 'Schnittstellen', width: 78, box: 'w-[98px]', active: true },
  { label: 'Service Discovery', width: 101, box: 'w-[121px]' },
  { label: 'Firewall', width: 43, box: 'w-[63px]' },
];

function Tabs() {
  return (
    <div className="flex h-[27px] shrink-0 flex-col border-b border-[#c8c8c8] bg-[#ebebeb]">
      <div className="flex h-[25px] items-end gap-0.5 border-b border-[#c8c8c8] bg-linear-to-b from-[#dedede] to-[#cfcfcf] pl-0.5">
        {TABS.map((tab) => (
          <div
            key={tab.label}
            className={
              tab.active
                ? `flex h-[23px] items-center justify-center rounded-t border border-b-0 border-[#b3b3b3] bg-linear-to-b from-white to-[#ececec] font-bold text-[#333] ${tab.box}`
                : `flex h-[23px] items-center justify-center rounded-t border border-b-0 border-[#b3b3b3] bg-linear-to-b from-[#dcdcdc] to-[#eaeaea] font-bold text-[#777] ${tab.box}`
            }
          >
            <Label width={tab.width} className="pt-0.5">{tab.label}</Label>
          </div>
        ))}
      </div>
    </div>
  );
}

function ToolButton({ icon, label, width, className }) {
  return (
    <div className={`flex h-[22px] items-center rounded-xs border border-[#dfdfdf] pl-0.5 text-[#9b9b9b] ${className}`}>
      <Icon name={icon} />
      <Label width={width} className="ml-[3px] pt-0.5 text-[#b8b8b8]">
        {label}
      </Label>
    </div>
  );
}

function Grid() {
  return (
    <div className="flex min-h-0 flex-1 flex-col text-black">
      <div className="flex h-6 shrink-0 border-y border-[#c5c5c5] bg-linear-to-b from-[#fafafa] to-[#e3e4e6]">
        {COLUMNS.map((col) => (
          <div key={col.title} className={`flex shrink-0 items-center border-r border-[#c5c5c5] pr-1.5 pl-[5px] ${col.sorted ? 'bg-linear-to-b from-white to-[#f4f4f5]' : ''} ${col.box}`}>
            <Label width={col.tw} className="pt-0.5">{col.title}</Label>
            {col.sorted && (
              <svg viewBox="0 0 8 4" className="ml-auto h-1 w-2">
                <path d="M0 4h8L4 0z" fill="#8a8a8a" />
              </svg>
            )}
          </div>
        ))}
      </div>
      <div className="flex h-[33px]">
        {COLUMNS.map((col) => (
          <div key={col.title} className={`flex shrink-0 flex-col border-r border-[#c9c9c9] pt-1 pl-[5px] leading-[13px] ${col.box}`}>
            {col.lines.map(([text, w]) => (
              <Label key={text} width={w} className="self-start">
                {text}
              </Label>
            ))}
          </div>
        ))}
      </div>
    </div>
  );
}

function PageButton({ path, className = '' }) {
  return (
    <div className={`flex size-[22px] items-center justify-center rounded-xs border border-[#dfdfdf] ${className}`}>
      <svg viewBox="0 0 16 16" className="size-4">
        <circle cx="8" cy="8" r="7.300" fill="#f1f1f1" stroke="#a5a5a5" strokeWidth="1.300" />
        <path d={path} fill="#9a9a9a" />
      </svg>
    </div>
  );
}

function PagingBar() {
  return (
    <div className="flex h-[30px] shrink-0 items-center border-t border-b border-[#c8c8c8] bg-linear-to-b from-[#e3e3e3] to-[#efefef] pl-0.5 text-black">
      <PageButton path="M8 4.500v7L3.500 8zM12.500 4.500v7L8 8z" />
      <PageButton path="M10.500 4v8L4.500 8z" className="ml-0.5" />
      <Separator className="ml-0.5" />
      <Label width={25} className="ml-[5px] pt-0.5">
        Page
      </Label>
      <div className="ml-2 flex h-[22px] w-[30px] items-center border border-[#b5b8c8] bg-white pt-0.5 pl-[3px]">1</div>
      <Label width={20} className="ml-[5px] pt-0.5">
        of 1
      </Label>
      <Separator className="ml-1.5" />
      <PageButton path="M5.500 4v8l6-4z" className="ml-0.5" />
      <PageButton path="M3.500 4.500v7L8 8zM8 4.500v7l4.500-3.500z" className="ml-0.5" />
      <Separator className="ml-0.5" />
      <Icon name="refresh" className="ml-[5px] size-4 text-[#474747]" />
      <Label width={102} className="mr-1.5 ml-auto pt-0.5">
        1 - 1 von 1 angezeigt
      </Label>
    </div>
  );
}

function Workspace() {
  return (
    <div className="flex min-w-0 flex-1 flex-col border-x border-[#c5c5c5] bg-white">
      <div className="flex h-7 shrink-0 items-center border-t border-b border-t-[#b9b2b4] border-b-[#c8c8c8] bg-linear-to-b from-[#e4e4e4] to-[#efefef] pl-0.5 text-[#333]">
        <div className="flex size-[22px] items-center justify-center rounded-xs border border-[#999] bg-white p-px">
          <div className="flex size-full items-center justify-center border border-dotted border-[#222]">
            <Icon name="home" className="size-4 text-[#474747]" />
          </div>
        </div>
        <Separator className="ml-0.5" />
        <Label width={35} className="ml-2 pt-0.5">
          System
        </Label>
        <Separator className="ml-2.5" />
        <Icon name="network" className="ml-[5px] size-4 text-[#474747]" />
        <Label width={45} className="ml-[3px] pt-0.5">
          Netzwerk
        </Label>
        <svg viewBox="0 0 16 16" className="ml-auto size-4">
          <path d="M2 2h12M2 8h12M2 14h12" stroke="#474747" strokeWidth="3.800" strokeLinecap="round" />
        </svg>
        <svg viewBox="0 0 5 3" className="mr-2 ml-2.5 h-[3px] w-[5px]">
          <path d="M0 0h5L2.500 3z" />
        </svg>
      </div>
      <Tabs />
      <div className="flex h-[26px] shrink-0 items-center bg-linear-to-b from-[#e4e4e4] to-[#efefef] pl-[5px] text-[#474747]">
        <Icon name="plus" />
        <Label width={54} className="ml-[3px] pt-0.5 text-[#333]">
          Hinzufügen
        </Label>
        <svg viewBox="0 0 5 3" className="ml-[11px] h-[3px] w-[5px]">
          <path d="M0 0h5L2.500 3z" />
        </svg>
        <ToolButton icon="edit" label="Bearbeiten" width={52} className="ml-2 w-[82px]" />
        <ToolButton icon="search" label="Identifizieren" width={63} className="ml-0.5 w-[93px]" />
        <ToolButton icon="cross" label="Löschen" width={39} className="ml-0.5 w-[69px]" />
      </div>
      <Grid />
      <PagingBar />
    </div>
  );
}

function Taskbar() {
  return (
    <div className="flex h-9 items-stretch bg-[#002b49] text-white">
      <div className="flex w-12 items-center justify-center">
        <Icon name="windows" className="mt-1 size-4" />
      </div>
      <div className="flex w-[344px] items-center bg-[#34596f] pt-1 pl-3">
        <Label width={209} className="text-[15px] text-[#a4b6c1]">
          Web und Windows durchsuchen
        </Label>
      </div>
      <div className="flex w-[54px] items-center pt-1 pl-3.5">
        <svg viewBox="0 0 20 14" className="h-3.5 w-5" fill="none" stroke="#fff" strokeWidth="1.100">
          <path d="M4.500.6h11v12.800h-11zM3 2.500H.6v9H3M17 2.500h2.400v9H17" />
        </svg>
      </div>
      <div className="flex w-10 items-center bg-linear-to-r from-[#287350] from-[43%] to-[#1d3f58] to-[43%] pt-1 pl-[9px]">
        <svg viewBox="0 0 22 19" className="h-[19px] w-[22px]">
          <path d="M0 0h9l1 2h12v15H0z" fill="#f7d675" />
          <path d="M0 4h22v13H0z" fill="#fde49a" />
          <path d="M4 10h14v9h-4v-5H8v5H4z" fill="#29b0ea" />
        </svg>
      </div>
      <div className="flex w-[54px] items-center pt-1 pl-[18px]">
        <svg viewBox="0 0 22 22" className="size-[22px]">
          <circle cx="11" cy="11" r="11" fill="#ffcd41" />
          <path d="M11 11 1.500 5.500A11 11 0 0 1 20.600 5.800H11z" fill="#dc4437" />
          <path d="M1.500 5.500A11 11 0 0 0 10.500 22l5-8.500L11 11 6 13z" fill="#119d58" />
          <circle cx="11" cy="11" r="5.200" fill="#f1f1f1" />
          <circle cx="11" cy="11" r="4.100" fill="#4b8af4" />
        </svg>
      </div>
      <div className="flex w-11 items-center bg-[#155d8b] pt-1 pl-[13px]">
        <svg viewBox="0 0 22 22" className="size-[22px]">
          <circle cx="11.500" cy="10.500" r="9.800" fill="#1c5c9e" />
          <path d="M5 4C8 0 15 0 18 4l-3 3-5-1-3 2z" fill="#5cc0ea" />
          <path d="M14 3c4 2 5 6 3 10l2-1 1-5-2-3z" fill="#143e75" />
          <path d="M1.500 2.500c.5 1.500 1.500 2 2.500 2.500 1-1 2-1 3-1-.5 1.500 0 2.500 1 3.300l2.500.4c0 1.500-2 1.800-2.500 2.500.2 2-1 2-.7 3 1.200 2.300 5.200 2.800 7.700 1.300 2.500-1.500 4-4.500 3.500-8.500 2 2 3 4 3 6.500C21.500 18 16.500 22 11 22 5 22 .3 17 .3 11 .2 8 .5 5 1.500 2.500z" fill="#e8661f" />
          <path d="M18.500 6c3 3 3.500 8 .500 12-2 2.500-5 4-8 4 5-3 8-8 7.500-16z" fill="#fbb72d" />
        </svg>
      </div>
      <div className="ml-px w-1 bg-[#124a70]" />
      <div className="ml-auto flex items-center pt-1">
        <svg viewBox="0 0 12 7" className="h-[7px] w-3">
          <path d="m.5 6.500 5.500-5.500 5.500 5.500" fill="none" stroke="#fff" strokeWidth="1.300" />
        </svg>
        <svg viewBox="0 0 17 14" className="ml-2.5 h-3.5 w-[17px]" fill="none" stroke="#fff">
          <path d="M.5 5h2l3.500-3.500v11L2.500 9h-2z" />
          <path d="M8.500 5c1 1 1 3 0 4" />
          <path d="M11 3c2 2.500 2 5.500 0 8M13.500 1.500c3 3.500 3 7.500 0 11" stroke="#4b6a80" />
        </svg>
        <svg viewBox="0 0 16 14" className="ml-[7px] h-3.5 w-4" fill="none" stroke="#fff">
          <path d="M6 2.500h9.500v8H2.500V6M.5 1h4v3.500h-4zM5 13.500h7.500M9 11v2.500" />
        </svg>
        <svg viewBox="0 0 17 15" className="ml-2 h-[15px] w-[17px]">
          <path d="M0 0h15.500v11H5l-3 3v-3H0z" fill="#fff" />
          <path d="M2.500 3h10.500M2.500 5.500h6M2.500 8h5" stroke="#002b49" strokeWidth="1.100" />
          <circle cx="12" cy="10.500" r="3.800" fill="#002b49" stroke="#fff" strokeWidth="1.200" />
          <path d="M10 10.500h4" stroke="#fff" strokeWidth="1.200" />
        </svg>
        <Label width={21} className="ml-2.5 text-xs">
          DEU
        </Label>
        <div className="ml-[17px] flex w-[55px] flex-col items-center pb-0.5 text-xs leading-[17px]">
          <Label width={27}>12:26</Label>
          <Label width={54}>18.03.2016</Label>
        </div>
      </div>
      <div className="ml-[11px] w-px bg-[#54758a]" />
      <div className="w-1" />
    </div>
  );
}

export default function App() {
  return (
    <div className={`flex h-[1076px] w-[1920px] flex-col overflow-hidden bg-white ${SEGOE}`}>
      <TitleBar />
      <NavBar />
      <BookmarkBar />
      <Banner />
      <div className={`flex h-[867px] shrink-0 bg-[#dfdfdf] text-[11px] leading-4 ${SANS}`}>
        <Sidebar />
        <div className="flex w-[5px] shrink-0 items-center">
          <svg viewBox="0 0 5 34" className="h-[34px] w-[5px]">
            <path d="M5 0v34L0 29V5z" fill="#eee" stroke="#c9c9c9" strokeWidth=".7" />
            <path d="M4.500 14.500v5L1.500 17z" fill="#222" />
          </svg>
        </div>
        <Workspace />
      </div>
      <Taskbar />
    </div>
  );
}
